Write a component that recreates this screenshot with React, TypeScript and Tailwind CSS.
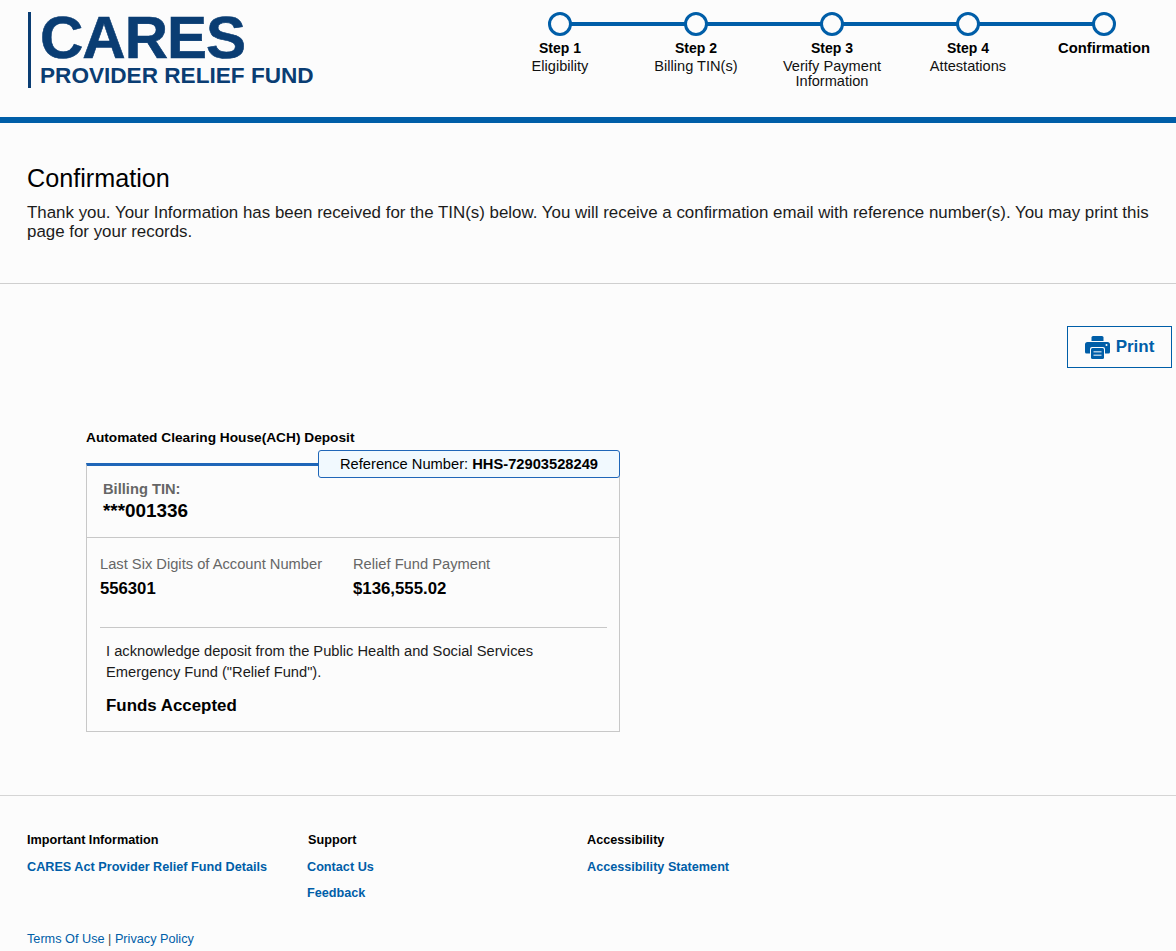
const steps = [
  { title: "Step 1", sub: ["Eligibility"] },
  { title: "Step 2", sub: ["Billing TIN(s)"] },
  { title: "Step 3", sub: ["Verify Payment", "Information"] },
  { title: "Step 4", sub: ["Attestations"] },
  { title: "Confirmation", sub: [] as string[] },
];

function Step({ title, sub, index }: { title: string; sub: string[]; index: number }) {
  return (
    <div className="relative flex w-[136px] flex-col items-center">
      {index < 4 && <div className="absolute left-[68px] top-[10px] h-1 w-[136px] bg-[#005ea8]" />}
      <div className="relative h-6 w-6 rounded-full border-[3px] border-[#005ea8] bg-[#fcfcfc]" />
      <div className={`mt-[3px] whitespace-nowrap text-center font-bold leading-[18px] text-black ${title === "Confirmation" ? "text-[14.8px]" : "text-[14px]"}`}>{title}</div>
      <div className="mt-[2px] whitespace-nowrap text-center text-[14.6px] leading-[15px] text-[#111]">
        {sub.map((s) => (
          <div key={s}>{s}</div>
        ))}
      </div>
    </div>
  );
}

function PrintIcon() {
  return (
    <svg viewBox="0 0 25 23" className="h-[23px] w-[25px]" fill="#005ea8">
      <path d="M6.500 1.500A1.500 1.500 0 0 1 8 0h9a1.500 1.500 0 0 1 1.500 1.500V5h-12z" />
      <path d="M2.500 6h20A2.500 2.500 0 0 1 25 8.500V16a1.500 1.500 0 0 1-1.500 1.500H20V13a2 2 0 0 0-2-2H7a2 2 0 0 0-2 2v4.500H1.500A1.500 1.500 0 0 1 0 16V8.500A2.500 2.500 0 0 1 2.500 6z" />
      <path d="M7.500 12h10A1.500 1.500 0 0 1 19 13.500V21.500a1.500 1.500 0 0 1-1.500 1.500h-10A1.500 1.500 0 0 1 6 21.500V13.500A1.500 1.500 0 0 1 7.500 12z" />
      <rect x="8.500" y="15" width="8" height="1.500" fill="#a9c8e2" />
      <rect x="8.500" y="18.500" width="8" height="1.500" fill="#a9c8e2" />
      <circle cx="21.500" cy="9" r="1" fill="#fcfcfc" />
    </svg>
  );
}

export default function App() {
  return (
    <div className="min-h-[951px] overflow-hidden bg-[#fcfcfc] font-['Liberation_Sans',Arial,sans-serif] text-black">
      <header className="flex h-[123px] justify-between border-b-[6px] border-[#005ea8] pl-[28px] pr-[4px] pt-[12px]">
        <div className="flex h-[76px] flex-col border-l-[3px] border-[#0a3d73] pl-[9px] text-[#0a3d73]">
          <div className="text-[60px] font-bold leading-[52px] tracking-[-1px] [-webkit-text-stroke:0.6px_#0a3d73]">CARES</div>
          <div className="text-[22.6px] font-bold leading-[24px]">PROVIDER RELIEF FUND</div>
        </div>
        <div className="flex">
          {steps.map((s, i) => (
            <Step key={s.title} title={s.title} sub={s.sub} index={i} />
          ))}
        </div>
      </header>

      <section className="border-b border-[#cfcfcf] px-[27px] pb-[42px] pt-[41px]">
        <h1 className="text-[25.2px] leading-[28px]">Confirmation</h1>
        <p className="mt-[11px] text-[16.9px] leading-[19px] text-[#1b1b1b]">
          Thank you. Your Information has been received for the TIN(s) below. You will receive a confirmation email with reference number(s). You may print this page for your records.
        </p>
      </section>

      <div className="flex justify-end pr-[4px] pt-[42px]">
        <button className="flex h-[42px] w-[105px] items-center justify-center gap-[6px] border border-[#005ea8] text-[17px] font-bold text-[#005ea8]">
          <PrintIcon />
          Print
        </button>
      </div>

      <main className="pl-[86px] pt-[63px]">
        <h2 className="text-[13.7px] font-bold leading-[14px]">Automated Clearing House(ACH) Deposit</h2>
        <div className="relative mt-[18px] h-[269px] w-[534px] border border-t-[3px] border-[#c8c8c8] border-t-[#1f66b8]">
          <div className="absolute right-[-1px] top-[-16px] flex h-[28px] w-[302px] items-center justify-center rounded-[3px] border border-[#1f66b8] bg-[#f1f9fe] text-[14.7px]">
            Reference Number:&nbsp;<b>HHS-72903528249</b>
          </div>
          <div className="h-[72px] border-b border-[#c8c8c8] pl-[16px] pt-[15px]">
            <div className="text-[14.7px] font-bold leading-[16px] text-[#666]">Billing TIN:</div>
            <div className="mt-[3px] text-[18.9px] font-bold leading-[22px]">***001336</div>
          </div>
          <div className="flex pl-[13px] pt-[17px]">
            <div className="w-[253px]">
              <div className="text-[14.7px] leading-[18px] text-[#666]">Last Six Digits of Account Number</div>
              <div className="mt-[7px] text-[16.7px] font-bold leading-[18px]">556301</div>
            </div>
            <div>
              <div className="text-[14.7px] leading-[18px] text-[#666]">Relief Fund Payment</div>
              <div className="mt-[7px] text-[16.8px] font-bold leading-[18px]">$136,555.02</div>
            </div>
          </div>
          <div className="ml-[13px] mr-[12px] mt-[29px] border-t border-[#c8c8c8] pl-[6px] pt-[13px]">
            <p className="text-[14.7px] leading-[21px] text-[#1b1b1b]">
              I acknowledge deposit from the Public Health and Social Services
              <br />
              Emergency Fund ("Relief Fund").
            </p>
            <div className="mt-[13px] text-[16.9px] font-bold leading-[20px]">Funds Accepted</div>
          </div>
        </div>
      </main>

      <footer className="mt-[63px] border-t border-[#d5d5d5] px-[27px] pt-[37px]">
        <div className="flex text-[12.66px] font-bold">
          <div className="w-[280px]">
            <div className="leading-[14px] text-black">Important Information</div>
            <div className="mt-[13px] leading-[14px] text-[#005ea8]">CARES Act Provider Relief Fund Details</div>
          </div>
          <div className="w-[280px]">
            <div className="pl-px leading-[14px] text-black">Support</div>
            <div className="mt-[13px] leading-[14px] text-[#005ea8]">Contact Us</div>
            <div className="mt-[12px] leading-[14px] text-[#005ea8]">Feedback</div>
          </div>
          <div>
            <div className="leading-[14px] text-black">Accessibility</div>
            <div className="mt-[13px] leading-[14px] text-[#005ea8]">Accessibility Statement</div>
          </div>
        </div>
        <div className="mt-[32px] text-[12.7px] leading-[14px] text-[#005ea8]">
          Terms Of Use <span className="text-[#444]">|</span> Privacy Policy
        </div>
      </footer>
    </div>
  );
}
